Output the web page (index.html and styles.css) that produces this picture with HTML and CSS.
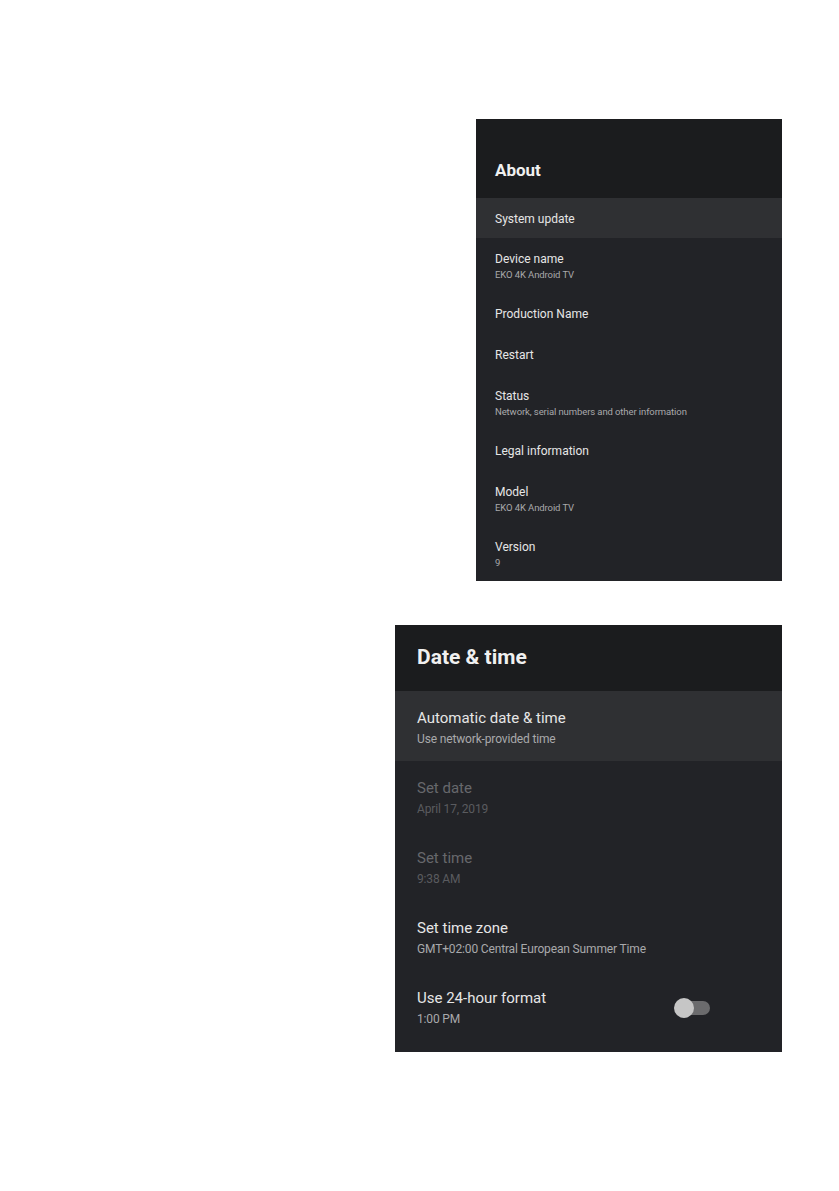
FILE: index.html
```html
<!DOCTYPE html>
<html lang="en">
<head>
    <meta charset="UTF-8">
    <meta name="viewport" content="width=device-width, initial-scale=1.0">
    <title>Settings - About / Date &amp; time</title>
    <link rel="stylesheet" href="styles.css">
</head>
<body>
    <div class="page">
        <!-- About screen -->
        <section class="panel about">
            <h2 class="panel-title">About</h2>
            <ul class="menu">
                <li class="item active"><span class="label">System update</span></li>
                <li class="item"><span class="label">Device name</span><span class="sub">EKO 4K Android TV</span></li>
                <li class="item"><span class="label">Production Name</span></li>
                <li class="item"><span class="label">Restart</span></li>
                <li class="item"><span class="label">Status</span><span class="sub">Network, serial numbers and other information</span></li>
                <li class="item"><span class="label">Legal information</span></li>
                <li class="item"><span class="label">Model</span><span class="sub">EKO 4K Android TV</span></li>
                <li class="item"><span class="label">Version</span><span class="sub">9</span></li>
            </ul>
        </section>

        <!-- Date & time screen -->
        <section class="panel datetime">
            <h2 class="panel-title">Date &amp; time</h2>
            <ul class="menu">
                <li class="item active">
                    <div class="text"><span class="label">Automatic date &amp; time</span><span class="sub">Use network-provided time</span></div>
                </li>
                <li class="item disabled">
                    <div class="text"><span class="label">Set date</span><span class="sub">April 17, 2019</span></div>
                </li>
                <li class="item disabled">
                    <div class="text"><span class="label">Set time</span><span class="sub">9:38 AM</span></div>
                </li>
                <li class="item">
                    <div class="text"><span class="label">Set time zone</span><span class="sub">GMT+02:00 Central European Summer Time</span></div>
                </li>
                <li class="item">
                    <div class="text"><span class="label">Use 24-hour format</span><span class="sub">1:00 PM</span></div>
                    <span class="switch"></span>
                </li>
            </ul>
        </section>
    </div>
</body>
</html>
```

FILE: styles.css
```css
body {
    margin: 0;
    background: #fff;
    font-family: Roboto, "Noto Sans", sans-serif;
    color: #e6e6e6;
}
.page {
    display: flex;
    flex-direction: column;
    padding-top: 119px;
    min-height: 1191px;
    box-sizing: border-box;
}
.panel {
    background: #222327;
}
.panel-title {
    margin: 0;
    background: #1b1c1e;
    font-weight: 700;
    color: #f0f0f0;
}
.menu {
    list-style: none;
    margin: 0;
    padding: 0;
}
.item {
    display: flex;
    flex-direction: column;
}
.item.active {
    background: #2f3033;
}
.label {
    display: block;
}
.sub {
    display: block;
    color: #a9a9ab;
}

/* About */
.about {
    margin-left: 476px;
    width: 306px;
}
.about .panel-title {
    font-size: 17px;
    line-height: 22px;
    padding: 40px 19px 17px;
}
.about .item {
    padding: 13px 19px 12px;
}
.about .item.active {
    padding-bottom: 11px;
}
.about .label {
    font-size: 12px;
    line-height: 16px;
}
.about .sub {
    margin-top: 1px;
    font-size: 9.5px;
    line-height: 13px;
    letter-spacing: -0.1px;
}

/* Date & time */
.datetime {
    margin-top: 44px;
    margin-left: 395px;
    width: 387px;
    padding-bottom: 11px;
}
.datetime .panel-title {
    font-size: 21px;
    line-height: 28px;
    padding: 18px 22px 20px;
}
.datetime .item {
    flex-direction: row;
    align-items: center;
    padding: 16px 72px 13px 22px;
}
.datetime .text {
    flex: 1;
}
.datetime .label {
    font-size: 15px;
    line-height: 22px;
}
.datetime .sub {
    margin-top: 1px;
    font-size: 12px;
    line-height: 18px;
    letter-spacing: -0.15px;
}
.item.disabled .label {
    color: #67686c;
}
.item.disabled .sub {
    color: #5a5b5f;
}

/* toggle switch, off state */
.switch {
    position: relative;
    width: 36px;
    height: 20px;
}
.switch::before {
    content: "";
    position: absolute;
    left: 10px;
    top: 3px;
    width: 26px;
    height: 14px;
    border-radius: 7px;
    background: #6b6b6d;
}
.switch::after {
    content: "";
    position: absolute;
    left: 0;
    top: 0;
    width: 20px;
    height: 20px;
    border-radius: 50%;
    background: #c6c6c6;
}
```
